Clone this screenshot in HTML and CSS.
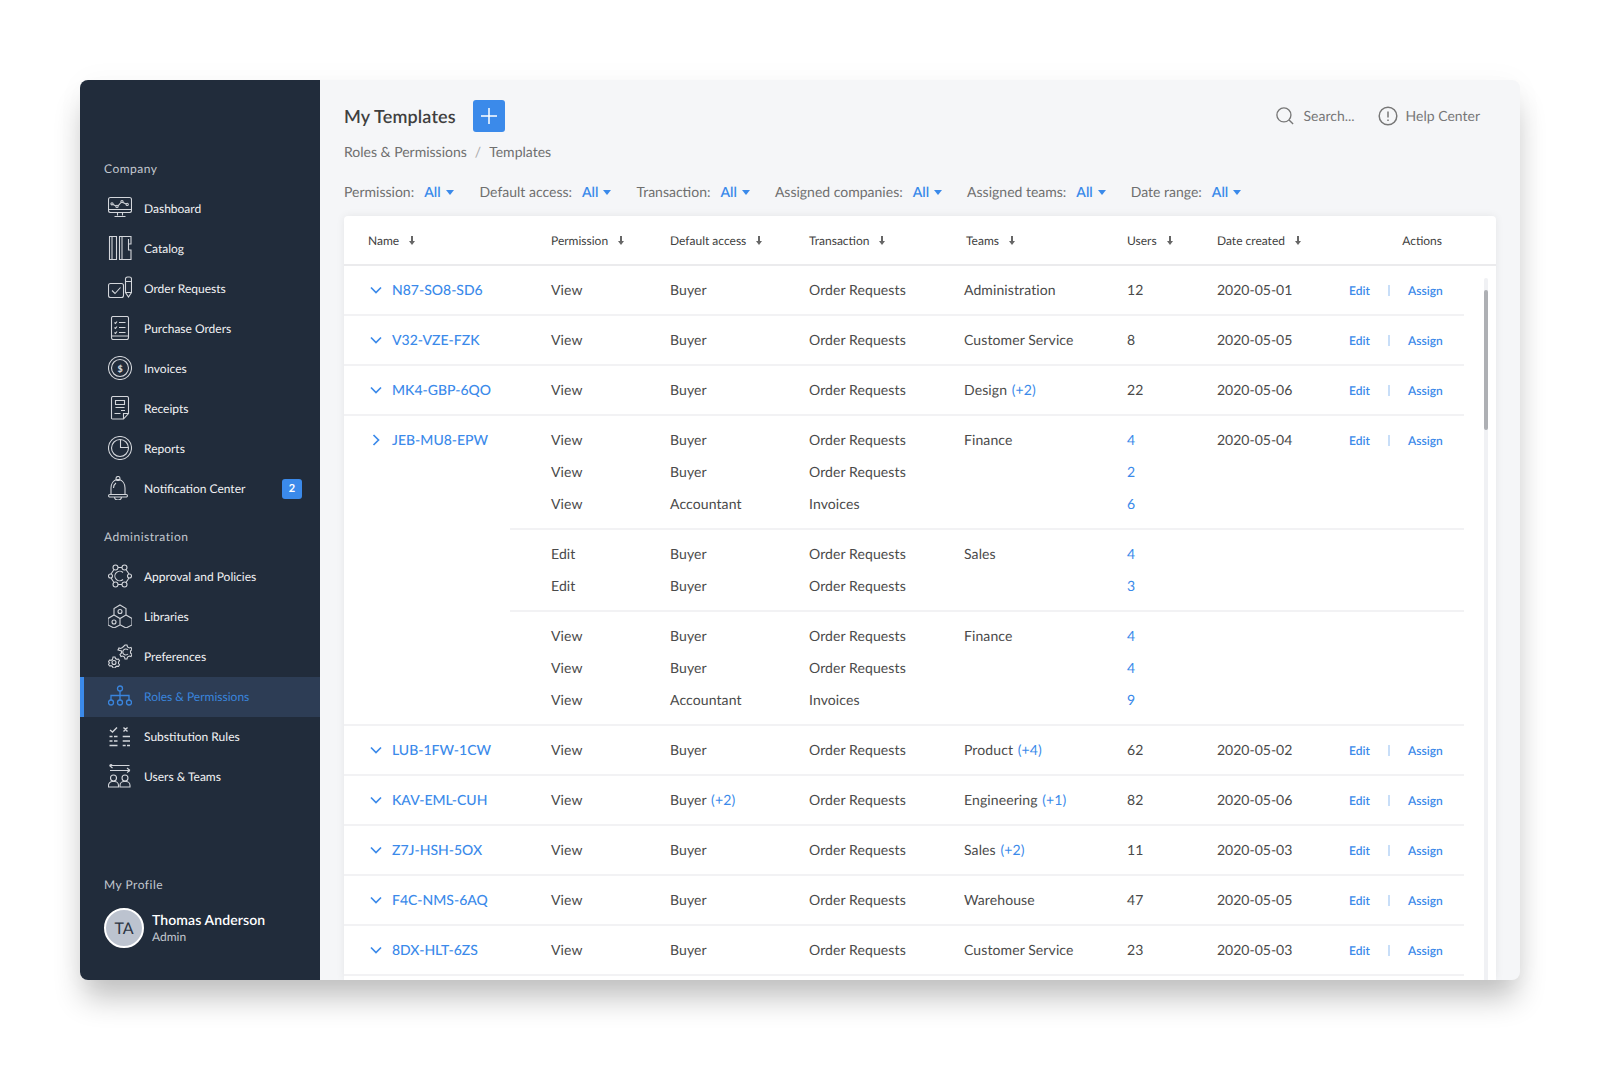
FILE: index.html
```html
<!DOCTYPE html>
<html lang="en">
<head>
<meta charset="utf-8">
<title>My Templates</title>
<link rel="stylesheet" href="styles.css">
</head>
<body>
<div class="window">
  <aside class="sidebar">
    <div class="section-title first">Company</div>
    <nav class="nav">
      <a class="nav-item"><svg class="icon" viewBox="0 0 24 24"><rect x=".5" y="1.5" width="23" height="15" rx="2"/><path d="M.5 13.5h23M9.5 16.5v3M14.5 16.5v3M6.5 20.5h11M5 8.600l3 1.400M10 9.800l3-3.300M15 6.400l3 1.600"/><circle cx="4" cy="7.800" r="1.100"/><circle cx="9" cy="10.400" r="1.100"/><circle cx="14" cy="5.600" r="1.100"/><circle cx="19.200" cy="8.400" r="1.100"/></svg><span>Dashboard</span></a>
      <a class="nav-item"><svg class="icon" viewBox="0 0 24 24"><path d="M1.500.5h7v23h-7zM4 .5v23M11.500.5h11.500v7.500h-2.500v6h2.500v9.500h-11.500zM14 .5v23M20.500 3v5"/></svg><span>Catalog</span></a>
      <a class="nav-item"><svg class="icon" viewBox="0 0 24 24"><rect x=".5" y="7.500" width="15" height="14" rx="2"/><path d="M4 14.500l3 3 5.500-6M17.500 3a2 2 0 0 1 2-2h2a2 2 0 0 1 2 2v13.500l-3 4.500-3-4.500zM17.500 5.500h6M17.500 16.500h6"/></svg><span>Order Requests</span></a>
      <a class="nav-item"><svg class="icon" viewBox="0 0 24 24"><path d="M3.500 21V2a1.500 1.500 0 0 1 1.500-1.500h14a1.500 1.500 0 0 1 1.500 1.500v19M3.500 21a2 2 0 0 0 0 .5c0 1 .7 2 1.500 2h14c.8 0 1.500-1 1.500-2v-1.500h-17M11 6.500h6.500M11 11.500h6.500M11 16.500h6.500M6.500 6.500l1 1 1.500-2M6.500 11.500l1 1 1.500-2M6.500 16.500l1 1 1.500-2"/></svg><span>Purchase Orders</span></a>
      <a class="nav-item"><svg class="icon" viewBox="0 0 24 24"><circle cx="12" cy="12" r="11.500"/><circle cx="12" cy="12" r="8.500"/><text class="dollar" x="12" y="15.500">$</text></svg><span>Invoices</span></a>
      <a class="nav-item"><svg class="icon" viewBox="0 0 24 24"><path d="M3.500 22.500V2a1.500 1.500 0 0 1 1.500-1.500h14a1.500 1.500 0 0 1 1.500 1.500v15.500l-5 5.500H5a1.500 1.500 0 0 1-1.500-.5zM15.500 23v-5.500h5M7.500 4.500h9v4h-9zM7.500 11.500h9M13 14.500h4M6.500 17.500h6"/></svg><span>Receipts</span></a>
      <a class="nav-item"><svg class="icon" viewBox="0 0 24 24"><circle cx="12" cy="12" r="11.500"/><circle cx="12" cy="12" r="8.500"/><path d="M12.500 3.500v8h8"/></svg><span>Reports</span></a>
      <a class="nav-item"><svg class="icon" viewBox="0 0 24 24"><circle cx="10" cy="2.500" r="2"/><path d="M3 18.500V12c0-4 2.500-7.500 5.500-8.500h3c3 1 5.500 4.500 5.500 8.500v6.500M1.800 18.500h16.400a1 1 0 0 1 0 2.500H1.800a1 1 0 0 1 0-2.500zM6.500 21a3.500 3 0 0 0 7 0M5.500 12c0-2 1-4 2.500-5"/></svg><span>Notification Center</span><b class="badge">2</b></a>
    </nav>
    <div class="section-title">Administration</div>
    <nav class="nav nav-admin">
      <a class="nav-item"><svg class="icon" viewBox="0 0 24 24"><circle cx="7.500" cy="3.500" r="2.500"/><circle cx="16.500" cy="3.500" r="2.500"/><circle cx="7.500" cy="20.500" r="2.500"/><circle cx="16.500" cy="20.500" r="2.500"/><circle cx="2.500" cy="12" r="2"/><circle cx="21.500" cy="12" r="2"/><path d="M10 3.500h4M10 20.500h4M6 5.500L3 10M18 5.500l3 4.500M6 18.500L3 14M18 18.500l3-4.500M15 8.500a4.800 4.800 0 1 0 0 7"/></svg><span>Approval and Policies</span></a>
      <a class="nav-item"><svg class="icon" viewBox="0 0 24 24"><path d="M12 1l6 3.500v6.500l-6 3.500-6-3.500V4.500zM6 11l6 3.500V21l-6 3-6-3v-6.500zM18 11l6 3.500V21l-6 3-5.500-3"/><circle cx="12" cy="7.500" r="2"/><circle cx="6" cy="18" r="2"/></svg><span>Libraries</span></a>
      <a class="nav-item"><svg class="icon" viewBox="0 0 24 24"><path d="M17 1h2l.5 2 1.800 1 1.700-.5 1 2-1.500 1.500v2l1.500 1.500-1 2-1.700-.5-1.800 1-.5 2h-2l-.5-2-1.800-1-1.700.5-1-2 1.500-1.500v-2L10 6l1-2 1.700.5 1.800-1zM5 13h2l.5 1.500 1.500.8 1.500-.3 1 1.800-1 1.200v1.500l1 1.200-1 1.800-1.500-.3-1.500.8L7 24H5l-.5-1.500-1.500-.8-1.500.3-1-1.800 1-1.200V19l-1-1.200 1-1.800 1.500.3 1.500-.8z"/><path d="M20 6a3 3 0 1 0 0 4"/><circle cx="6" cy="18.500" r="2"/></svg><span>Preferences</span></a>
      <a class="nav-item active"><svg class="icon" viewBox="0 0 24 24"><circle cx="12" cy="4.500" r="2.500"/><circle cx="3" cy="18.500" r="2.500"/><circle cx="12" cy="18.500" r="2.500"/><circle cx="21" cy="18.500" r="2.500"/><path d="M12 7v9M3 16v-4.500h18V16"/></svg><span>Roles &amp; Permissions</span></a>
      <a class="nav-item"><svg class="icon heavy" viewBox="0 0 24 24"><path d="M2 6l2.500 2L9 3.500M15.500 3.500l4 4M19.500 3.500l-4 4M1.500 12.500h3M6 12.500h3.500M1.500 17h3M6 17h3.500M1.500 21.500h8M14.700 12.500h7.300M14.700 17h7.300M14.700 21.500h3M19 21.500h3"/></svg><span>Substitution Rules</span></a>
      <a class="nav-item"><svg class="icon" viewBox="0 0 24 24"><path d="M1.500 1.500h20M1.500 1.500l3-2M1.500 1.500l3 2.500M22 6.500H2M22 6.500l-3-2.500M22 6.500l-3 2"/><circle cx="5.500" cy="14" r="3"/><circle cx="17" cy="14" r="3"/><path d="M.5 23v-1.500a4 4 0 0 1 4-4h2a4 4 0 0 1 4 4v1.500zM12 23v-1.500a4 4 0 0 1 4-4h2a4 4 0 0 1 4 4v1.500z"/></svg><span>Users &amp; Teams</span></a>
    </nav>
    <div class="profile">
      <div class="section-title profile-title">My Profile</div>
      <div class="user">
        <div class="avatar">TA</div>
        <div class="user-text"><strong>Thomas Anderson</strong><small>Admin</small></div>
      </div>
    </div>
  </aside>

  <main class="main">
    <header class="topbar">
      <h1>My Templates</h1>
      <button class="add" aria-label="Add"><svg viewBox="0 0 18 18"><path d="M9 1v16M1 9h16"/></svg></button>
      <div class="tools">
        <span class="tool"><svg class="tool-icon search" viewBox="0 0 20 20"><circle cx="8.800" cy="8.800" r="7.800"/><path d="M14.500 14.500l4.500 4.500"/></svg>Search...</span>
        <span class="tool"><svg class="tool-icon help" viewBox="0 0 20 20"><circle cx="10" cy="10" r="8.800"/><path d="M10 5.500v6M10 13.500v1.500"/></svg>Help Center</span>
      </div>
    </header>
    <div class="crumbs">Roles &amp; Permissions<i>/</i>Templates</div>
    <div class="filters">
      <span class="filter">Permission:<b>All</b><em></em></span>
      <span class="filter">Default access:<b>All</b><em></em></span>
      <span class="filter">Transaction:<b>All</b><em></em></span>
      <span class="filter">Assigned companies:<b>All</b><em></em></span>
      <span class="filter">Assigned teams:<b>All</b><em></em></span>
      <span class="filter">Date range:<b>All</b><em></em></span>
    </div>

    <section class="card">
      <div class="thead">
        <div class="row head">
          <span class="th">Name<u></u></span><span class="th">Permission<u></u></span><span class="th">Default access<u></u></span><span class="th">Transaction<u></u></span><span class="th team-head">Teams<u></u></span><span class="th">Users<u></u></span><span class="th">Date created<u></u></span><span class="th actions-head">Actions</span>
        </div>
      </div>
      <div class="tbody">
        <div class="row main-row"><a class="name"><svg class="chev" viewBox="0 0 12 12"><path d="M1 3.500l5 5 5-5"/></svg>N87-SO8-SD6</a><span>View</span><span>Buyer</span><span>Order Requests</span><span>Administration</span><span>12</span><span class="date">2020-05-01</span><span class="act"><a>Edit</a><i></i><a>Assign</a></span></div>
        <div class="row main-row"><a class="name"><svg class="chev" viewBox="0 0 12 12"><path d="M1 3.500l5 5 5-5"/></svg>V32-VZE-FZK</a><span>View</span><span>Buyer</span><span>Order Requests</span><span>Customer Service</span><span>8</span><span class="date">2020-05-05</span><span class="act"><a>Edit</a><i></i><a>Assign</a></span></div>
        <div class="row main-row"><a class="name"><svg class="chev" viewBox="0 0 12 12"><path d="M1 3.500l5 5 5-5"/></svg>MK4-GBP-6QO</a><span>View</span><span>Buyer</span><span>Order Requests</span><span>Design <a class="more">(+2)</a></span><span>22</span><span class="date">2020-05-06</span><span class="act"><a>Edit</a><i></i><a>Assign</a></span></div>

        <div class="group">
          <div class="row sub"><a class="name"><svg class="chev" viewBox="0 0 12 12"><path d="M3.500 1l5 5-5 5"/></svg>JEB-MU8-EPW</a><span>View</span><span>Buyer</span><span>Order Requests</span><span>Finance</span><a class="num">4</a><span class="date">2020-05-04</span><span class="act"><a>Edit</a><i></i><a>Assign</a></span></div>
          <div class="row sub"><span></span><span>View</span><span>Buyer</span><span>Order Requests</span><span></span><a class="num">2</a></div>
          <div class="row sub"><span></span><span>View</span><span>Accountant</span><span>Invoices</span><span></span><a class="num">6</a></div>
        </div>
        <div class="divider inner"></div>
        <div class="group">
          <div class="row sub"><span></span><span>Edit</span><span>Buyer</span><span>Order Requests</span><span>Sales</span><a class="num">4</a></div>
          <div class="row sub"><span></span><span>Edit</span><span>Buyer</span><span>Order Requests</span><span></span><a class="num">3</a></div>
        </div>
        <div class="divider inner"></div>
        <div class="group">
          <div class="row sub"><span></span><span>View</span><span>Buyer</span><span>Order Requests</span><span>Finance</span><a class="num">4</a></div>
          <div class="row sub"><span></span><span>View</span><span>Buyer</span><span>Order Requests</span><span></span><a class="num">4</a></div>
          <div class="row sub"><span></span><span>View</span><span>Accountant</span><span>Invoices</span><span></span><a class="num">9</a></div>
        </div>
        <div class="divider"></div>

        <div class="row main-row"><a class="name"><svg class="chev" viewBox="0 0 12 12"><path d="M1 3.500l5 5 5-5"/></svg>LUB-1FW-1CW</a><span>View</span><span>Buyer</span><span>Order Requests</span><span>Product <a class="more">(+4)</a></span><span>62</span><span class="date">2020-05-02</span><span class="act"><a>Edit</a><i></i><a>Assign</a></span></div>
        <div class="row main-row"><a class="name"><svg class="chev" viewBox="0 0 12 12"><path d="M1 3.500l5 5 5-5"/></svg>KAV-EML-CUH</a><span>View</span><span>Buyer <a class="more">(+2)</a></span><span>Order Requests</span><span>Engineering <a class="more">(+1)</a></span><span>82</span><span class="date">2020-05-06</span><span class="act"><a>Edit</a><i></i><a>Assign</a></span></div>
        <div class="row main-row"><a class="name"><svg class="chev" viewBox="0 0 12 12"><path d="M1 3.500l5 5 5-5"/></svg>Z7J-HSH-5OX</a><span>View</span><span>Buyer</span><span>Order Requests</span><span>Sales <a class="more">(+2)</a></span><span>11</span><span class="date">2020-05-03</span><span class="act"><a>Edit</a><i></i><a>Assign</a></span></div>
        <div class="row main-row"><a class="name"><svg class="chev" viewBox="0 0 12 12"><path d="M1 3.500l5 5 5-5"/></svg>F4C-NMS-6AQ</a><span>View</span><span>Buyer</span><span>Order Requests</span><span>Warehouse</span><span>47</span><span class="date">2020-05-05</span><span class="act"><a>Edit</a><i></i><a>Assign</a></span></div>
        <div class="row main-row"><a class="name"><svg class="chev" viewBox="0 0 12 12"><path d="M1 3.500l5 5 5-5"/></svg>8DX-HLT-6ZS</a><span>View</span><span>Buyer</span><span>Order Requests</span><span>Customer Service</span><span>23</span><span class="date">2020-05-03</span><span class="act"><a>Edit</a><i></i><a>Assign</a></span></div>
      </div>
      <div class="scrollbar"><div class="thumb"></div></div>
    </section>
  </main>
</div>
</body>
</html>
```

FILE: styles.css
```css
* { box-sizing: border-box; }
html, body { margin: 0; padding: 0; background: #fff; }
body { padding: 80px; height: 1080px; overflow: hidden; font-family: Lato, "Liberation Sans", sans-serif; color: #4a4a4a; text-rendering: geometricPrecision; }

.window {
  width: 1440px; height: 900px; display: flex; overflow: hidden;
  border-radius: 8px; background: #f5f6f8;
  box-shadow: 0 22px 30px -4px rgba(0,0,0,.24), 0 0 30px rgba(0,0,0,.03);
}

/* sidebar */
.sidebar { width: 240px; flex: none; background: #212c3b; display: flex; flex-direction: column; color: #fff; }
.section-title { padding-left: 24px; font-size: 12px; line-height: 16px; letter-spacing: .5px; color: #c3c8cf; margin: 0 0 11px; }
.section-title.first { margin-top: 81px; }
.nav { display: flex; flex-direction: column; }
.nav + .section-title { margin-top: 21px; margin-bottom: 12px; }
.nav-item { height: 40px; padding-left: 28px; display: flex; align-items: center; gap: 12px; font-size: 12px; color: #f1f2f4; position: relative; }
.nav-admin .nav-item { padding-bottom: 2px; }
.icon { width: 24px; height: 24px; flex: none; fill: none; stroke: #d3d6db; stroke-width: 1.1; }
.icon.heavy { stroke-width: 1.4; }
.dollar { font: 900 9px Lato, sans-serif; fill: #d3d6db; stroke: none; text-anchor: middle; }
.badge { position: absolute; left: 202px; top: 11px; width: 20px; height: 20px; border-radius: 3px; background: #3b8aea; color: #fff; font-size: 11px; text-align: center; line-height: 20px; }
.nav-item.active { background: #2d3d55; color: #3a85dd; box-shadow: inset 4px 0 0 #3b8aea; }
.nav-item.active .icon { stroke: #3a85dd; stroke-width: 1.3; }
.profile { margin-top: auto; padding-bottom: 32px; }
.profile-title { margin-bottom: 15px; }
.user { padding-left: 24px; display: flex; align-items: center; gap: 8px; }
.avatar { width: 40px; height: 40px; border-radius: 50%; border: 2px solid #fff; background: #bcc3cf; color: #2b3442; font-size: 16px; display: flex; align-items: center; justify-content: center; }
.user-text { display: flex; flex-direction: column; margin-top: -1px; }
.user-text strong { font-size: 14px; line-height: 17px; font-weight: 600; color: #fff; letter-spacing: .1px; }
.user-text small { font-size: 12px; line-height: 15px; color: #c3c8cf; margin-top: 1px; }

/* main */
.main { flex: 1; min-width: 0; padding: 20px 24px 0; display: flex; flex-direction: column; }
.topbar { height: 32px; display: flex; align-items: center; flex: none; }
h1 { margin: 0 17px 0 0; font-size: 18px; font-weight: 600; letter-spacing: .15px; color: #3f3f3f; line-height: 32px; }
.add { width: 32px; height: 32px; padding: 0; border: 0; border-radius: 3px; background: #3b8aea; display: flex; align-items: center; justify-content: center; }
.add svg { width: 18px; height: 18px; fill: none; stroke: #fff; stroke-width: 1.500; }
.tools { margin-left: auto; margin-right: 16px; display: flex; gap: 23px; }
.tool { display: flex; align-items: center; gap: 9px; font-size: 14px; line-height: 20px; color: #777; }
.tool:last-child { gap: 8px; }
.tool-icon { width: 20px; height: 20px; fill: none; stroke: #777; stroke-width: 1.500; }
.tool-icon.search { width: 18px; height: 18px; }
.crumbs { margin-top: 10px; font-size: 14px; line-height: 20px; color: #6f6f6f; }
.crumbs i { margin: 0 8px; color: #aaa; font-style: normal; }
.filters { margin-top: 20px; display: flex; gap: 25px; font-size: 14px; line-height: 20px; color: #6f6f6f; }
.filter { display: flex; align-items: center; }
.filter:first-child { margin-right: 1px; }
.filter b { margin-left: 10px; font-weight: 600; color: #3b8aea; }
.filter em { margin-left: 5px; width: 0; height: 0; border: 4.500px solid transparent; border-top: 5px solid #3b8aea; border-bottom: 0; }

.card { position: relative; margin-top: 14px; flex: 1; min-height: 0; overflow: hidden; width: 1152px; background: #fff; border-radius: 4px 4px 0 0; box-shadow: 0 0 8px rgba(0,0,0,.07); }
.thead { border-bottom: 2px solid #ebebed; }
.row { width: 1120px; display: grid; grid-template-columns: 207px 119px 139px 155px 163px 90px 132px 115px; align-items: center; font-size: 14px; letter-spacing: .1px; color: #4a4a4a; }
.date { letter-spacing: 0; }
.head { height: 48px; font-size: 12px; letter-spacing: 0; color: #3f3f3f; }
.th { display: flex; align-items: center; gap: 10px; }
.th:first-child { padding-left: 24px; }
.th u { position: relative; width: 6px; height: 9px; display: block; text-decoration: none; }
.th u::before { content: ""; position: absolute; left: 2px; top: 0; width: 2px; height: 6px; background: #666; }
.th u::after { content: ""; position: absolute; left: 0; top: 5px; border: 3px solid transparent; border-top: 4px solid #666; border-bottom: 0; }
.team-head { padding-left: 2px; }
.actions-head { justify-content: flex-end; padding-right: 22px; }

.main-row { height: 50px; border-bottom: 2px solid #f2f2f4; padding-bottom: 2px; }
.group { padding: 7px 0 9px; }
.sub { height: 32px; }
.divider { width: 1120px; height: 2px; background: #f2f2f4; }
.divider.inner { margin-left: 166px; width: 954px; }
.name { display: flex; align-items: center; gap: 10px; padding-left: 26px; color: #3b8aea; font-size: 14px; font-weight: 500; letter-spacing: 0; }
.chev { width: 12px; height: 12px; fill: none; stroke: #3b8aea; stroke-width: 1.700; position: relative; top: 1px; }
.more, .num { color: #3b8aea; }
.more { margin-left: 1px; }
.act { display: grid; grid-template-columns: 39px 20px auto; align-items: center; font-size: 12px; font-weight: 600; letter-spacing: 0; padding-top: 2px; }
.act a { color: #3b8aea; }
.act i { width: 2px; height: 11px; background: #c8def8; }
.scrollbar { position: absolute; left: 1140px; top: 62px; bottom: 0; width: 4px; background: #f0f1f4; border-radius: 2px 2px 0 0; }
.thumb { margin-top: 12px; height: 140px; background: #aeb0b4; border-radius: 2px; }
```
